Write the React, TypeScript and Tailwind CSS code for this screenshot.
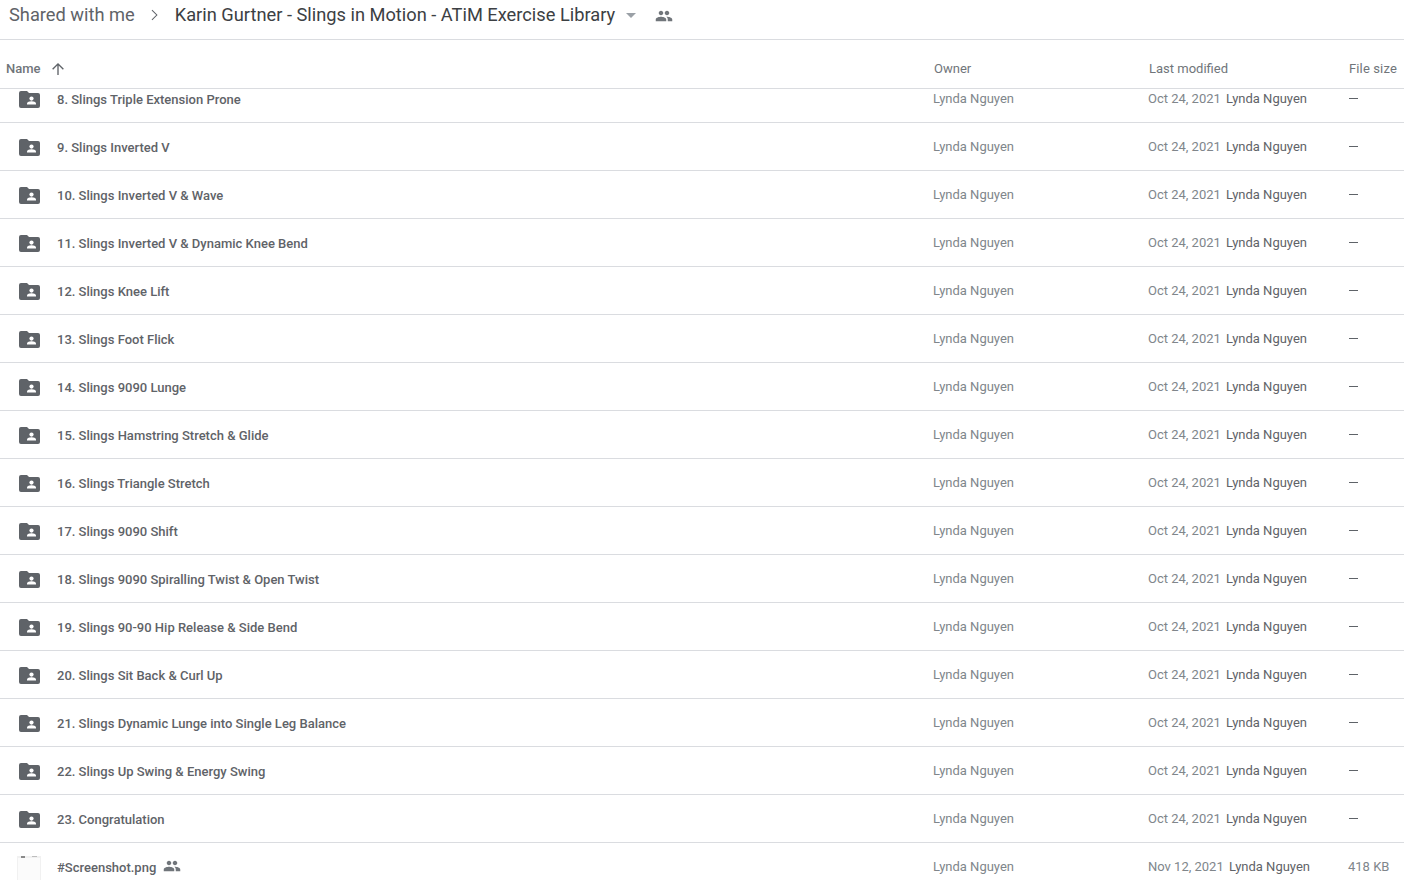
import React from "react"

type Row = {
  name: string
}

const rows: Row[] = [
  { name: "8. Slings Triple Extension Prone" },
  { name: "9. Slings Inverted V" },
  { name: "10. Slings Inverted V & Wave" },
  { name: "11. Slings Inverted V & Dynamic Knee Bend" },
  { name: "12. Slings Knee Lift" },
  { name: "13. Slings Foot Flick" },
  { name: "14. Slings 9090 Lunge" },
  { name: "15. Slings Hamstring Stretch & Glide" },
  { name: "16. Slings Triangle Stretch" },
  { name: "17. Slings 9090 Shift" },
  { name: "18. Slings 9090 Spiralling Twist & Open Twist" },
  { name: "19. Slings 90-90 Hip Release & Side Bend" },
  { name: "20. Slings Sit Back & Curl Up" },
  { name: "21. Slings Dynamic Lunge into Single Leg Balance" },
  { name: "22. Slings Up Swing & Energy Swing" },
  { name: "23. Congratulation" },
]

function PeopleIcon({ className }: { className: string }) {
  return (
    <svg viewBox="0 0 24 24" className={className} fill="#70757a">
      <path d="M16 11c1.66 0 2.99-1.34 2.99-3S17.66 5 16 5s-3 1.34-3 3 1.34 3 3 3zm-8 0c1.66 0 2.99-1.34 2.99-3S9.66 5 8 5 5 6.34 5 8s1.34 3 3 3zm0 2c-2.33 0-7 1.17-7 3.5V19h14v-2.5C15 14.17 10.33 13 8 13zm8 0c-.29 0-.62.02-.97.05 1.16.84 1.97 1.97 1.97 3.45V19h6v-2.5c0-2.33-4.67-3.5-7-3.5z" />
    </svg>
  )
}

function SharedFolderIcon() {
  return (
    <svg viewBox="0 0 21 17" className="mt-[1px] h-[17px] w-[21px]">
      <path
        fill="#5f6368"
        d="M2 0h6l2 2h9a2 2 0 0 1 2 2v11a2 2 0 0 1-2 2H2a2 2 0 0 1-2-2V2a2 2 0 0 1 2-2z"
      />
      <circle cx="12.500" cy="7.600" r="2.100" fill="#fff" />
      <path fill="#fff" d="M8 13.400v-1c0-1.500 3-2.200 4.500-2.200s4.500.7 4.500 2.200v1z" />
    </svg>
  )
}

function FileRow({ row }: { row: Row }) {
  return (
    <div className="flex h-[48px] shrink-0 items-center border-b border-[#dadce0]">
      <div className="flex w-[933px] items-center pl-[19px]">
        <SharedFolderIcon />
        <span className="ml-[17px] translate-y-[1px] text-[13px] font-medium text-[#5f6368]">{row.name}</span>
      </div>
      <div className="w-[215px] text-[13px] text-[#80868b]">Lynda Nguyen</div>
      <div className="flex w-[201px] items-center text-[13px]">
        <span className="w-[78px] text-[#80868b]">Oct 24, 2021</span>
        <span className="text-[#5f6368]">Lynda Nguyen</span>
      </div>
      <div className="w-[9px] border-t border-[#5f6368]" />
    </div>
  )
}

export default function App() {
  return (
    <div className="flex h-[880px] w-[1404px] flex-col overflow-hidden bg-white font-['Roboto',sans-serif]">
      {/* BREADCRUMB */}
      <div className="flex h-[40px] shrink-0 items-start border-b border-[#dadce0] pl-[9px] pt-[1px] text-[18.25px]">
        <span className="text-[#5f6368]">Shared with me</span>
        <svg viewBox="0 0 24 24" className="ml-[8px] mt-[2px] h-[24px] w-[24px]" fill="#5f6368">
          <path d="M9.300 6.700 8.600 7.400 13.200 12l-4.600 4.600.7.7 5.300-5.300z" />
        </svg>
        <span className="ml-[8px] text-[#3c4043]">Karin Gurtner - Slings in Motion - ATiM Exercise Library</span>
        <svg viewBox="0 0 10 5" className="ml-[11px] mt-[12px] h-[5px] w-[10px]" fill="#9aa0a6">
          <path d="M0 0h10L5 5z" />
        </svg>
        <PeopleIcon className="ml-[19px] mt-[6px] h-[18px] w-[18px]" />
      </div>

      {/* COLUMN HEADERS */}
      <div className="flex h-[49px] shrink-0 items-center border-b border-[#dadce0] pt-[9px] text-[13px] text-[#70757a]">
        <div className="flex w-[934px] items-center pl-[6px]">
          <span className="font-medium">Name</span>
          <svg viewBox="0 0 24 24" className="ml-[8px] h-[18px] w-[18px]" fill="#5f6368">
            <path d="M12.900 20V7.400l5.600 5.600 1.300-1.300L12 4l-7.800 7.700L5.500 13l5.600-5.600V20z" />
          </svg>
        </div>
        <div className="w-[215px]">Owner</div>
        <div className="w-[200px]">Last modified</div>
        <div className="tracking-[0.01em]">File size</div>
      </div>

      {/* FILE LIST */}
      <div className="flex-1 overflow-hidden">
        <div className="-mt-[14px] flex flex-col">
          {rows.map((row) => (
            <FileRow key={row.name} row={row} />
          ))}
          <div className="flex h-[48px] shrink-0 items-center">
            <div className="flex w-[933px] items-center pl-[17px]">
              <div className="mt-[3px] h-[25px] w-[24px] border-x border-[#f1f1f1] bg-[#fbfbfb]">
                <div className="flex h-[2px] justify-between bg-[#f1f1f1] px-[3px]">
                  <div className="h-[2px] w-[4px] bg-[#8a8a8a]" />
                  <div className="h-[1px] w-[5px] bg-[#bdbdbd]" />
                </div>
              </div>
              <span className="ml-[16px] translate-y-[1px] text-[13px] font-medium text-[#5f6368]">#Screenshot.png</span>
              <PeopleIcon className="ml-[7px] -mt-[2px] h-[18px] w-[18px]" />
            </div>
            <div className="w-[215px] text-[13px] text-[#80868b]">Lynda Nguyen</div>
            <div className="flex w-[200px] items-center text-[13px]">
              <span className="w-[81px] text-[#80868b]">Nov 12, 2021</span>
              <span className="text-[#5f6368]">Lynda Nguyen</span>
            </div>
            <div className="text-[13px] text-[#80868b]">418 KB</div>
          </div>
        </div>
      </div>
    </div>
  )
}
